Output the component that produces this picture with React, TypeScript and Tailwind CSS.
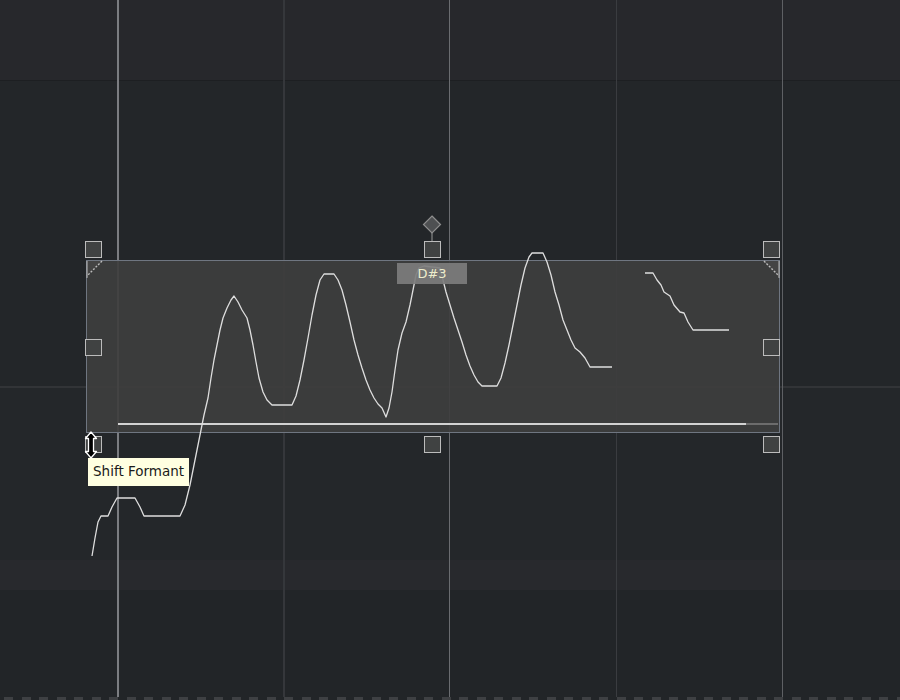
import React from 'react'

// pitch curve, screen coordinates
const curveA = [
  [92, 556], [95, 538], [98, 522], [101, 516], [108, 516], [112, 507], [117, 498], [135, 498],
  [140, 507], [144, 516], [180, 516], [185, 505], [190, 485], [195, 460], [200, 435], [204, 415],
  [208, 398], [211, 378], [214, 360], [217, 345], [220, 330], [223, 318], [227, 308], [231, 300],
  [234, 296], [238, 302], [242, 310], [247, 318], [250, 330], [253, 345], [256, 362], [259, 378],
  [263, 392], [267, 400], [272, 405], [292, 405], [296, 396], [300, 380], [304, 360], [308, 338],
  [312, 315], [316, 295], [320, 280], [324, 274], [334, 274], [338, 280], [342, 290], [346, 305],
  [350, 322], [354, 340], [358, 355], [362, 368], [366, 380], [370, 390], [374, 398], [378, 404],
  [382, 408], [386, 417], [389, 408], [392, 392], [395, 370], [398, 350], [402, 333], [406, 322],
  [410, 305], [413, 290], [416, 275], [419, 268], [424, 266], [440, 268], [443, 280], [446, 292],
  [450, 305], [454, 318], [458, 330], [462, 342], [466, 355], [470, 366], [474, 375], [478, 382],
  [482, 386], [497, 386], [501, 378], [505, 363], [509, 345], [513, 325], [517, 305], [521, 285],
  [525, 268], [529, 257], [532, 253], [543, 253], [547, 262], [551, 275], [555, 292], [559, 305],
  [563, 320], [567, 330], [571, 340], [575, 348], [580, 352], [585, 358], [590, 367], [612, 367],
]
const curveB = [
  [645, 273], [653, 273], [657, 280], [661, 285], [664, 292], [670, 296], [674, 305], [680, 312],
  [684, 313], [688, 322], [693, 330], [729, 330],
]
const pts = (p: number[][]) => p.map(([x, y]) => `${x},${y}`).join(' ')

function Handle() {
  return <div className="w-[17px] h-[17px] shrink-0 border-[1.5px] border-[#bcbcbc] bg-[#404242]" />
}

export default function App() {
  const dashes = Array.from({ length: 52 })
  return (
    <div className="relative w-[900px] h-[700px] overflow-hidden bg-[#222528] font-['DejaVu_Sans',sans-serif]">
      {/* background rows */}
      <div className="flex flex-col h-full">
        <div className="h-[81px] bg-[#27282c] border-b border-[#1d1f22]" />
        <div className="h-[305px] bg-[#232629]" />
        <div className="h-[2px] bg-[#323437]" />
        <div className="h-[172px] bg-[#24272a]" />
        <div className="h-[30px] bg-[#28292d]" />
        <div className="flex-1 bg-[#222528]" />
        <div className="h-[3px] flex gap-[8.5px] pl-[4px]">
          {dashes.map((_, i) => (
            <div key={i} className="w-[9px] h-full bg-[#3e4043] shrink-0" />
          ))}
        </div>
      </div>

      {/* bar / beat lines */}
      <div className="absolute inset-x-0 top-0 bottom-[3px] flex pl-[117px]">
        <div className="w-[2px] bg-[#7b7d81]" />
        <div className="w-[164px]" />
        <div className="w-[2px] bg-[#35373b]" />
        <div className="w-[164px]" />
        <div className="w-px bg-[#6a6c70]" />
        <div className="w-[166px]" />
        <div className="w-px bg-[#3a3c40]" />
        <div className="w-[165px]" />
        <div className="w-px bg-[#5e6064]" />
      </div>

      {/* note block */}
      <div className="absolute left-[86px] top-[260px] w-[694px] h-[173px] flex flex-col justify-between border border-[#6f7681] bg-[rgba(62,62,62,0.92)]">
        <div className="relative z-10 flex justify-center pt-[2px] pr-[2px]">
          <div className="w-[70px] h-[21px] flex items-center justify-center bg-[rgba(125,125,125,0.92)] text-[13px] leading-none text-[#ededcc]">
            D#3
          </div>
        </div>
        <div className="flex pl-[31px] pr-px pb-[7px]">
          <div className="flex-1 h-[2px] bg-[#d2d2d2]" />
          <div className="w-[32px] h-[2px] bg-[#6c6c6c]" />
        </div>
      </div>

      <svg className="absolute inset-0 pointer-events-none" width="900" height="700">
        {/* corner triangles */}
        <path d="M87 261 H102 L87 276 Z" fill="#444" />
        <line x1="102" y1="261" x2="87" y2="276" stroke="#bbb" strokeWidth="1.4" strokeDasharray="2 1.5" />
        <path d="M763 261 H779 V277 Z" fill="#444" />
        <line x1="764" y1="261" x2="779" y2="276" stroke="#bbb" strokeWidth="1.4" strokeDasharray="2 1.5" />
        <line x1="779" y1="261" x2="779" y2="278" stroke="#bbb" strokeWidth="1" />
        <line x1="87" y1="261" x2="87" y2="278" stroke="#bbb" strokeWidth="1" />

        <polyline points={pts(curveA)} fill="none" stroke="#dedede" strokeWidth="1.3" strokeLinejoin="round" />
        <polyline points={pts(curveB)} fill="none" stroke="#dedede" strokeWidth="1.3" strokeLinejoin="round" />

        {/* pitch diamond */}
        <line x1="432" y1="233" x2="432" y2="241" stroke="#9a9a9a" strokeWidth="1" />
        <path d="M432 216 L440.5 224.5 L432 233 L423.5 224.5 Z" fill="#4e5052" stroke="#8e8e8e" strokeWidth="1.2" />
      </svg>

      {/* resize handles */}
      <div className="absolute left-[85px] top-[241px] w-[695px] h-[212px] flex flex-col justify-between">
        <div className="flex justify-between">
          <Handle />
          <Handle />
          <Handle />
        </div>
        <div className="flex justify-between">
          <Handle />
          <Handle />
        </div>
        <div className="flex justify-between">
          <Handle />
          <Handle />
          <Handle />
        </div>
      </div>

      {/* tooltip */}
      <div className="absolute left-[88px] top-[458px] h-[28px] px-[5px] flex items-center bg-[#ffffe1] text-[13.5px] text-[#1a1a1a] leading-none whitespace-nowrap">
        Shift Formant
      </div>

      {/* cursor */}
      <svg className="absolute left-[84px] top-[431px]" width="14" height="28" viewBox="0 0 14 28">
        <path
          d="M7 1 L12.5 7.5 H9.5 V20.5 H12.5 L7 27 L1.5 20.5 H4.5 V7.5 H1.5 Z"
          fill="#000"
          stroke="#fff"
          strokeWidth="1.3"
          strokeLinejoin="round"
        />
      </svg>
    </div>
  )
}
